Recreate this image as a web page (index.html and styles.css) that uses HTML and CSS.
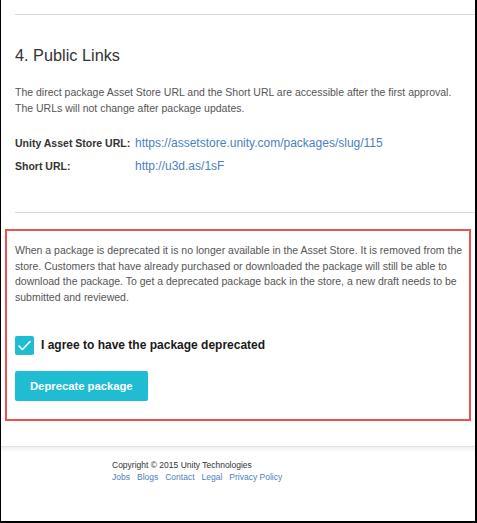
FILE: index.html
```html
<!DOCTYPE html>
<html lang="en">
<head>
<meta charset="utf-8">
<title>Public Links</title>
<link rel="stylesheet" href="styles.css">
</head>
<body>
<div class="frame">
  <div class="section">
    <div class="rule rule-top"></div>
    <h2 class="title">4. Public Links</h2>
    <p class="intro">The direct package Asset Store URL and the Short URL are accessible after the first approval. The URLs will not change after package updates.</p>
    <div class="links">
      <span class="label">Unity Asset Store URL:</span>
      <a class="link" href="#">https://assetstore.unity.com/packages/slug/115</a>
      <span class="label">Short URL:</span>
      <a class="link" href="#">http://u3d.as/1sF</a>
    </div>
    <div class="rule rule-bottom"></div>
  </div>
  <div class="danger">
    <p class="danger-text">When a package is deprecated it is no longer available in the Asset Store. It is removed from the store. Customers that have already purchased or downloaded the package will still be able to download the package. To get a deprecated package back in the store, a new draft needs to be submitted and reviewed.</p>
    <label class="agree">
      <span class="check">
        <svg width="19" height="19" viewBox="0 0 19 19"><polyline points="4,10 7.5,13.5 15,5.5" fill="none" stroke="#fff" stroke-width="1.6" stroke-linecap="round" stroke-linejoin="round"/></svg>
      </span>
      <span class="agree-text">I agree to have the package deprecated</span>
    </label>
    <button class="btn" type="button">Deprecate package</button>
  </div>
  <div class="footer">
    <div class="copy">Copyright © 2015 Unity Technologies</div>
    <div class="footer-links">
      <a href="#">Jobs</a>
      <a href="#">Blogs</a>
      <a href="#">Contact</a>
      <a href="#">Legal</a>
      <a href="#">Privacy Policy</a>
    </div>
  </div>
</div>
</body>
</html>
```
FILE: styles.css
```css
html, body {
  margin: 0;
  padding: 0;
  background: #fff;
}
body {
  font-family: "Liberation Sans", Arial, sans-serif;
  color: #555;
}
.frame {
  width: 477px;
  height: 523px;
  box-sizing: border-box;
  border-left: 1px solid #000;
  border-right: 2px solid #000;
  border-bottom: 2px solid #000;
  overflow: hidden;
  display: flex;
  flex-direction: column;
}
.section {
  padding-left: 14px;
}
.rule {
  height: 0;
  border-top: 1px solid #d8d8d8;
}
.rule-top {
  margin-top: 14px;
}
.title {
  margin: 30.5px 0 0;
  font-size: 16.3px;
  line-height: 18px;
  font-weight: normal;
  color: #333;
}
.intro {
  margin: 21.7px 0 0;
  font-size: 10.5px;
  line-height: 15.75px;
  color: #555;
  width: 450px;
}
.links {
  margin-top: 14.9px;
  display: grid;
  grid-template-columns: 120px auto;
  grid-auto-rows: 23px;
  align-items: baseline;
}
.label {
  font-size: 10.5px;
  font-weight: bold;
  color: #333;
  line-height: 23px;
}
.link {
  font-size: 12px;
  line-height: 23px;
  color: #4a7fc3;
  text-decoration: none;
  justify-self: start;
}
.rule-bottom {
  margin-top: 34.4px;
}
.danger {
  margin: 16px 4px 0;
  border: 2px solid #e8524f;
  padding: 11.8px 1px 18px 8px;
}
.danger-text {
  margin: 0;
  font-size: 10.5px;
  line-height: 15.75px;
  color: #555;
}
.agree {
  margin-top: 30.2px;
  display: flex;
  align-items: center;
  gap: 7px;
  height: 19px;
}
.check {
  width: 19px;
  height: 19px;
  border-radius: 2px;
  background: #1fbcd3;
  display: flex;
}
.agree-text {
  font-size: 12px;
  font-weight: bold;
  line-height: 19px;
  color: #1a1a1a;
}
.btn {
  display: block;
  margin-top: 16px;
  height: 30px;
  padding: 0 15px;
  border: 0;
  border-radius: 2px;
  background: #1fbcd3;
  color: #fff;
  font-family: "Liberation Sans", Arial, sans-serif;
  font-size: 11.25px;
  font-weight: bold;
  line-height: 30px;
}
.footer {
  margin-top: 25px;
  flex: 1;
  border-top: 1px solid #e2e2e2;
  background: linear-gradient(#efefef, #fff 5px);
  padding: 11.6px 0 0 111px;
  font-size: 8.5px;
  line-height: 12.3px;
}
.copy {
  color: #333;
}
.footer-links {
  display: flex;
  gap: 7px;
}
.footer-links a {
  color: #4a7fc3;
  text-decoration: none;
}
```
